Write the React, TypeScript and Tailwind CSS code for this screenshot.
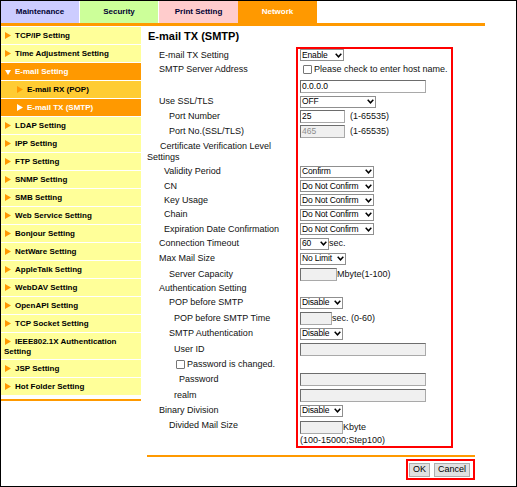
import React from "react";

const F = { fontFamily: '"Liberation Sans", Arial, sans-serif' };

function Tri({ color, down }: { color: string; down?: boolean }) {
  return down ? (
    <svg width="6" height="6" viewBox="0 0 6 6" className="inline-block shrink-0">
      <polygon points="0,1 6,1 3,6" fill={color} />
    </svg>
  ) : (
    <svg width="6" height="7" viewBox="0 0 6 7" className="inline-block shrink-0">
      <polygon points="0,0 6,3.5 0,7" fill={color} />
    </svg>
  );
}

function Chevron() {
  return (
    <svg width="7" height="5" viewBox="0 0 7 5" className="shrink-0">
      <polyline points="0.7,0.8 3.5,3.8 6.3,0.8" fill="none" stroke="#000" strokeWidth="1.5" />
    </svg>
  );
}

function Select({ w, text }: { w: number; text: string }) {
  return (
    <div
      className="h-[12px] bg-white border border-[#8f8f8f] flex items-center justify-between pl-[1px] pr-[1px] text-[8.5px] leading-none text-black overflow-hidden"
      style={{ width: w }}
    >
      <span className="whitespace-nowrap tracking-[-0.15px]">{text}</span>
      <Chevron />
    </div>
  );
}

function Input({ w, value, gray, dim }: { w: number; value?: string; gray?: boolean; dim?: boolean }) {
  return (
    <div
      className={`h-[13px] border border-[#a9a9a9] border-t-[#6d6d6d] border-l-[#6d6d6d] flex items-center pl-[1px] text-[8.5px] leading-none ${
        gray ? "bg-[#f0f0f0]" : "bg-white"
      } ${dim ? "text-[#8d8d8d]" : "text-black"}`}
      style={{ width: w }}
    >
      {value}
    </div>
  );
}

function Check() {
  return <div className="w-[9px] h-[9px] border border-[#767676] rounded-[1px] bg-white shrink-0" />;
}

type Row = { h: number; label?: React.ReactNode; pl?: number; value?: React.ReactNode; top?: boolean };

const rows: Row[] = [
  { h: 12, label: "E-mail TX Setting", pl: 12, value: <Select w={44} text="Enable" /> },
  {
    h: 17,
    label: "SMTP Server Address",
    pl: 12,
    value: (
      <div className="flex items-center gap-[2px] pl-[3px]">
        <Check />
        <span>Please check to enter host name.</span>
      </div>
    ),
  },
  { h: 16, value: <Input w={126} value="0.0.0.0" /> },
  { h: 15, label: "Use SSL/TLS", pl: 12, value: <Select w={76} text="OFF" /> },
  {
    h: 15,
    label: "Port Number",
    pl: 22,
    value: (
      <div className="flex items-center gap-[5px]">
        <Input w={45} value="25" />
        <span>(1-65535)</span>
      </div>
    ),
  },
  {
    h: 15,
    label: "Port No.(SSL/TLS)",
    pl: 22,
    value: (
      <div className="flex items-center gap-[5px]">
        <Input w={45} value="465" gray dim />
        <span>(1-65535)</span>
      </div>
    ),
  },
  {
    h: 25,
    label: (
      <span className="block indent-[13px] leading-[11px]">Certificate Verification Level Settings</span>
    ),
    pl: 0,
  },
  { h: 15, label: "Validity Period", pl: 17, value: <Select w={74} text="Confirm" /> },
  { h: 14, label: "CN", pl: 17, value: <Select w={74} text="Do Not Confirm" /> },
  { h: 14, label: "Key Usage", pl: 17, value: <Select w={74} text="Do Not Confirm" /> },
  { h: 15, label: "Chain", pl: 17, value: <Select w={74} text="Do Not Confirm" /> },
  { h: 14, label: "Expiration Date Confirmation", pl: 17, value: <Select w={74} text="Do Not Confirm" /> },
  {
    h: 15,
    label: "Connection Timeout",
    pl: 12,
    value: (
      <div className="flex items-center">
        <Select w={29} text="60" />
        <span>sec.</span>
      </div>
    ),
  },
  { h: 15, label: "Max Mail Size", pl: 12, value: <Select w={46} text="No Limit" /> },
  {
    h: 16,
    label: "Server Capacity",
    pl: 22,
    value: (
      <div className="flex items-center">
        <Input w={37} gray />
        <span>Mbyte(1-100)</span>
      </div>
    ),
  },
  { h: 13, label: "Authentication Setting", pl: 12 },
  { h: 15, label: "POP before SMTP", pl: 22, value: <Select w={43} text="Disable" /> },
  {
    h: 16,
    label: "POP before SMTP Time",
    pl: 27,
    value: (
      <div className="flex items-center">
        <Input w={32} gray />
        <span>sec. (0-60)</span>
      </div>
    ),
  },
  { h: 15, label: "SMTP Authentication", pl: 22, value: <Select w={43} text="Disable" /> },
  { h: 16, label: "User ID", pl: 27, value: <Input w={126} gray /> },
  {
    h: 15,
    label: (
      <div className="flex items-center gap-[2px]">
        <Check />
        <span>Password is changed.</span>
      </div>
    ),
    pl: 29,
  },
  { h: 15, label: "Password", pl: 32, value: <Input w={126} gray /> },
  { h: 16, label: "realm", pl: 27, value: <Input w={126} gray /> },
  { h: 15, label: "Binary Division", pl: 12, value: <Select w={43} text="Disable" /> },
  {
    h: 28,
    top: true,
    label: <span className="block pt-[2px]">Divided Mail Size</span>,
    pl: 22,
    value: (
      <div className="flex flex-col pt-[3px]">
        <div className="flex items-center">
          <Input w={43} gray />
          <span>Kbyte</span>
        </div>
        <span className="leading-[12px]">(100-15000;Step100)</span>
      </div>
    ),
  },
];

const side: { t: string; kind?: "open" | "sub" | "subActive"; h?: number }[] = [
  { t: "TCP/IP Setting" },
  { t: "Time Adjustment Setting" },
  { t: "E-mail Setting", kind: "open" },
  { t: "E-mail RX (POP)", kind: "sub" },
  { t: "E-mail TX (SMTP)", kind: "subActive" },
  { t: "LDAP Setting" },
  { t: "IPP Setting" },
  { t: "FTP Setting" },
  { t: "SNMP Setting" },
  { t: "SMB Setting" },
  { t: "Web Service Setting" },
  { t: "Bonjour Setting" },
  { t: "NetWare Setting" },
  { t: "AppleTalk Setting" },
  { t: "WebDAV Setting" },
  { t: "OpenAPI Setting" },
  { t: "TCP Socket Setting" },
  { t: "IEEE802.1X Authentication Setting", h: 27 },
  { t: "JSP Setting" },
  { t: "Hot Folder Setting" },
];

function SideItem({ t, kind, h }: { t: string; kind?: string; h?: number }) {
  if (h) {
    return (
      <div className="h-[27px] bg-[#ffff99] border-b border-white pl-[3px] pt-[4px] text-[8px] font-bold leading-[10px] text-black">
        <span className="inline-block w-[11px] pl-[1px]">
          <Tri color="#ff9900" />
        </span>
        {t}
      </div>
    );
  }
  const bg =
    kind === "open" || kind === "subActive" ? "bg-[#ff9900] text-white" : kind === "sub" ? "bg-[#ffcc33] text-black" : "bg-[#ffff99] text-black";
  const pl = kind === "sub" || kind === "subActive" ? "pl-[16px]" : "pl-[4px]";
  const triColor = kind === "open" || kind === "subActive" ? "#ffffff" : "#ff9900";
  return (
    <div className={`h-[18px] border-b border-white flex items-center gap-[4px] ${pl} ${bg} text-[8px] font-bold`}>
      <Tri color={triColor} down={kind === "open"} />
      <span>{t}</span>
    </div>
  );
}

export default function App() {
  return (
    <div className="w-[517px] h-[487px] bg-white border border-black overflow-hidden text-black" style={F}>
      {/* Tabs */}
      <div className="flex h-[22px] text-[8px] font-bold">
        <div className="w-[78px] bg-[#ccccff] flex items-center justify-center text-[#000033]">Maintenance</div>
        <div className="w-[1px] bg-white" />
        <div className="w-[78px] bg-[#ccff99] flex items-center justify-center text-[#000033]">Security</div>
        <div className="w-[1px] bg-white" />
        <div className="w-[79px] bg-[#ffcccc] flex items-center justify-center text-[#000033]">Print Setting</div>
        <div className="w-[79px] bg-[#ff9900] flex items-center justify-center text-white">Network</div>
      </div>
      <div className="w-[484px] h-[3px] bg-[#ff9900]" />
      <div className="flex pt-[1px]">
        {/* Sidebar */}
        <div className="w-[140px] flex flex-col">
          {side.map((s) => (
            <SideItem key={s.t} t={s.t} kind={s.kind} h={s.h} />
          ))}
          <div className="h-[2px] mt-[3px] bg-[#ff9900]" />
        </div>
        {/* Main */}
        <div className="flex flex-col pl-[6px]">
          <div className="pt-[3px] pl-[1px] h-[20px] text-[11px] font-bold leading-[13px]">E-mail TX (SMTP)</div>
          <div className="flex text-[9px] leading-[11px] text-[#111]">
            <div className="w-[149px] flex flex-col pt-[2px]">
              {rows.map((r, i) => (
                <div
                  key={i}
                  className={`flex ${r.top ? "items-start" : "items-center"}`}
                  style={{ height: r.h, paddingLeft: r.pl ?? 0 }}
                >
                  {r.label}
                </div>
              ))}
            </div>
            <div className="w-[157px] border-2 border-[#ff0000] flex flex-col pl-[2px]">
              {rows.map((r, i) => (
                <div key={i} className={`flex ${r.top ? "items-start" : "items-center"}`} style={{ height: r.h }}>
                  {r.value}
                </div>
              ))}
            </div>
          </div>
          <div className="w-[328px] h-[2px] bg-[#ff9900] mt-[7px]" />
          <div className="w-[328px] flex justify-end mt-[2px]">
            <div className="w-[69px] h-[21px] border-2 border-[#ff0000] flex items-center gap-[4px] pl-[1px]">
              <div className="h-[14px] px-[3px] bg-[#e1e1e1] border border-[#adadad] flex items-center text-[9px] leading-none">OK</div>
              <div className="h-[14px] px-[3px] bg-[#e1e1e1] border border-[#adadad] flex items-center text-[9px] leading-none">Cancel</div>
            </div>
          </div>
        </div>
      </div>
    </div>
  );
}
